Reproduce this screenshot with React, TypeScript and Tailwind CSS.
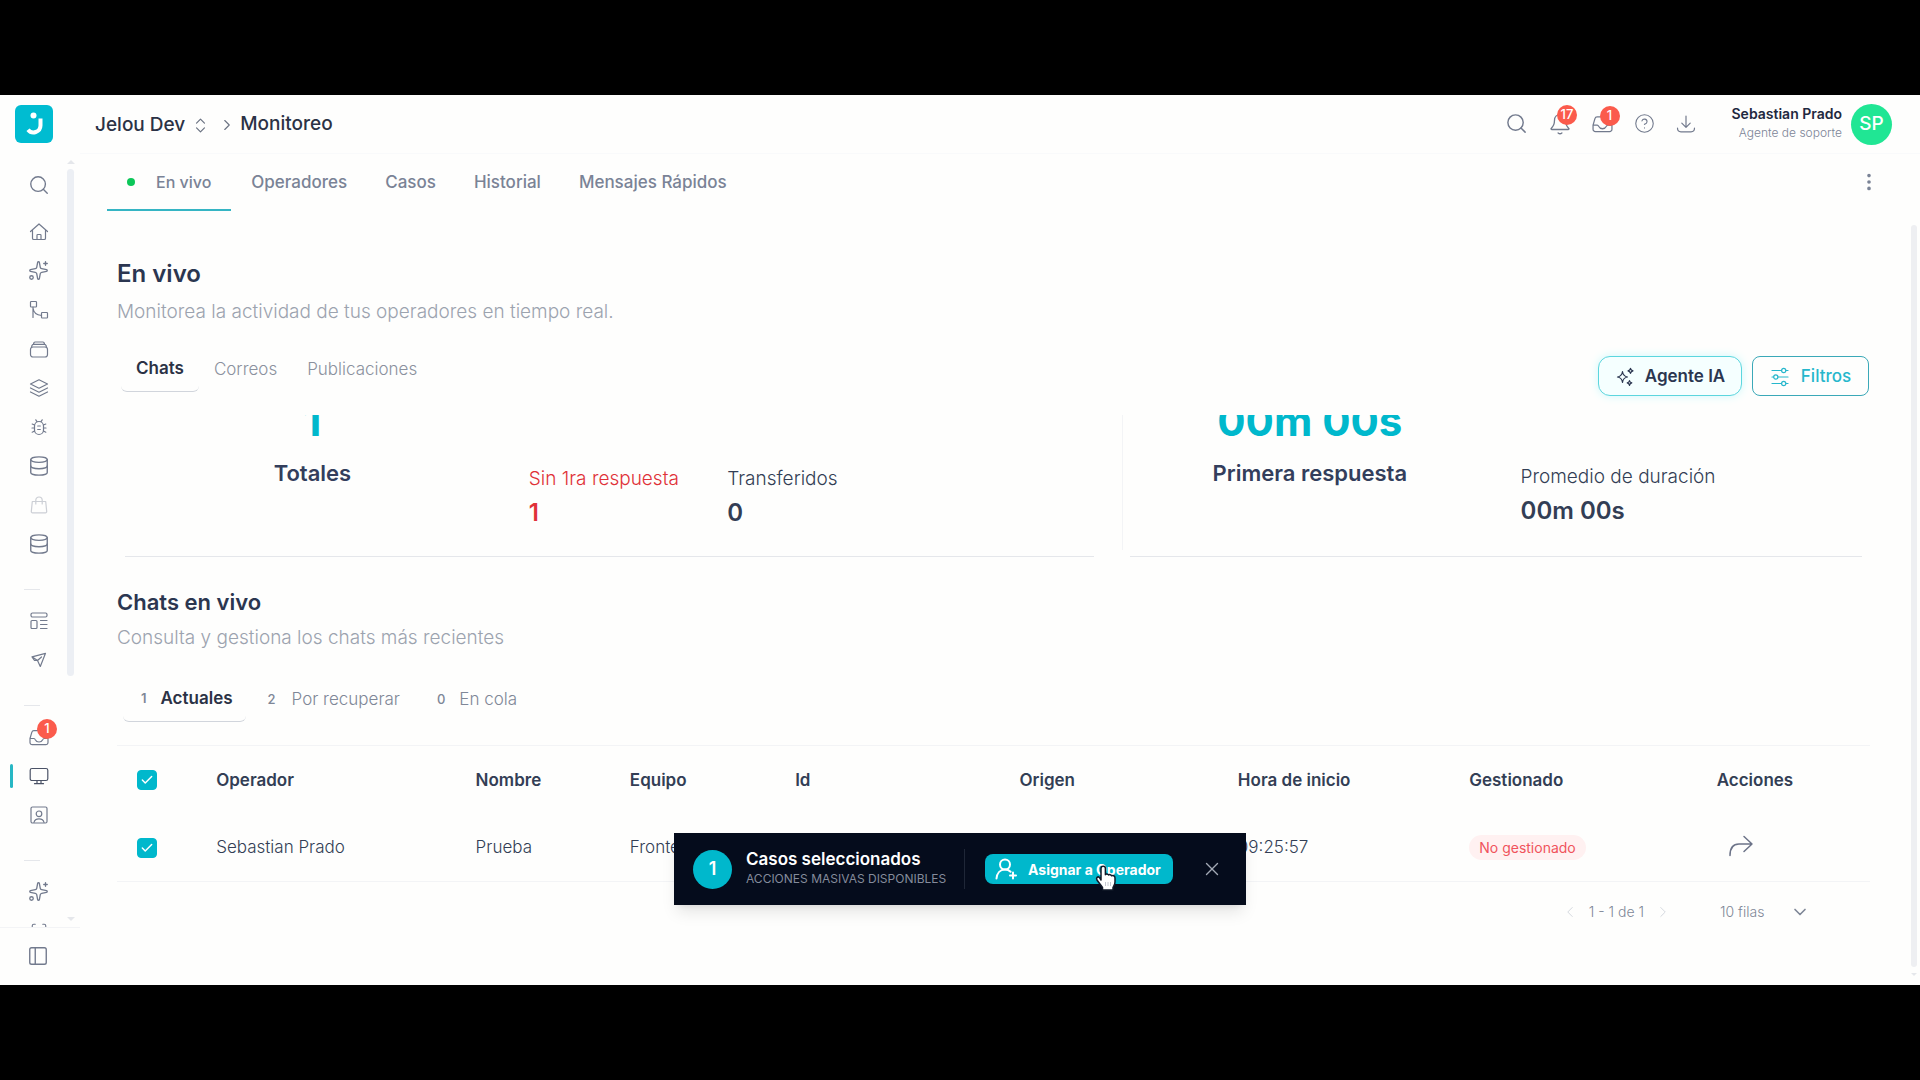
import { useState, type ReactNode } from "react"
import { Check, ChevronDown, ChevronLeft, ChevronRight, ChevronsUpDown, CircleQuestionMark, Database, EllipsisVertical, PanelLeft, Scan, Search, Sparkles, X } from "lucide-react"

type IconProps = { size?: number; className?: string; children: ReactNode };

function Icon({ size = 20, className = "", children }: IconProps) {
    return (
        <svg width={size} height={size} viewBox="0 0 20 20" fill="none" stroke="currentColor" strokeWidth="1.2" strokeLinecap="round" strokeLinejoin="round" className={className} aria-hidden="true">
            {children}
        </svg>
    )
}

const HomeIcon = () => (
    <Icon><path d="M1.5 9.5 10 2l8.500 7.500M3.500 8v8.200a1.300 1.300 0 0 0 1.300 1.300h10.400a1.300 1.300 0 0 0 1.300-1.300V8M8 17.500v-4.200a.8.8 0 0 1 .8-.8h2.400a.8.8 0 0 1 .8.8v4.200" /></Icon>
);
const FlowIcon = () => (
    <Icon><rect x="1.500" y="1.500" width="6" height="5.500" rx=".8" /><rect x="12.500" y="12.500" width="6" height="5.500" rx=".8" /><path d="M4 7v10.500M4 8c.5 4.500 3 7 8.500 7.500" /></Icon>
);
const ArchiveIcon = () => (
    <Icon><rect x="1.500" y="8" width="17" height="10" rx="2.500" /><path d="M2.500 8.300 3 6.500A1.500 1.500 0 0 1 4.500 5.300h11A1.500 1.500 0 0 1 17 6.500l.5 1.800M4.500 5.200l.3-1.200A1.300 1.300 0 0 1 6 3h8a1.300 1.300 0 0 1 1.200 1l.3 1.200" /></Icon>
);
const LayersIcon = () => (
    <Icon><path d="m10 1.800 8.500 4.200-8.500 4.200L1.500 6zM1.500 10l8.500 4.200 8.500-4.200M1.500 14l8.500 4.200 8.500-4.200" /></Icon>
);
const BugIcon = () => (
    <Icon><rect x="5.500" y="4.500" width="9" height="13" rx="4.500" /><path d="M8 4.600 6.800 2.800M12 4.600l1.200-1.800M5.500 8 3.200 7M5.500 11H3M5.500 14l-2.300 1.200M14.500 8l2.300-1M14.500 11H17M14.500 14l2.300 1.200M8.700 9h2.600M8.700 12.500h2.600" /></Icon>
);
const BagIcon = () => (
    <Icon><path d="M3.300 6.500h13.400l1 10a1.200 1.200 0 0 1-1.200 1.300h-13a1.200 1.200 0 0 1-1.200-1.300zM6.800 9V5.200a3.200 3.200 0 0 1 6.400 0V9" /></Icon>
);
const TemplateIcon = () => (
    <Icon><rect x="2" y="2" width="16" height="4" rx="1.500" /><rect x="2" y="9.500" width="6" height="8" rx="1" /><path d="M11.500 9.500H18M11.500 13.500H18M11.500 17.500H18" /></Icon>
);
const SendIcon = () => (
    <Icon><path d="m3 6.800 13.500-3.500-5.200 13.200-2.800-6zM8.500 10.500l4-3.500M3 6.800l2.500 3.700 3 0" /></Icon>
);
const InboxIcon = ({ size = 21 }: { size?: number }) => (
    <Icon size={size}><path d="M1 11.500 2.800 5.300A2.200 2.200 0 0 1 5 3.700h10a2.200 2.200 0 0 1 2.200 1.600L19 11.500v4a2.200 2.200 0 0 1-2.200 2.200H3.200A2.200 2.200 0 0 1 1 15.500zM1 11.500h4c.8 0 1 .5 1.300 1.200.7 1.500 2 2.300 3.700 2.300s3-.8 3.700-2.300c.3-.7.500-1.200 1.300-1.200h4" /></Icon>
);
const MonitorIcon = () => (
    <Icon><rect x="1.200" y="2.500" width="17.600" height="12" rx="1.800" /><path d="M8 14.500v3M12 14.500v3M5.500 17.700h9" /></Icon>
);
const ContactIcon = () => (
    <Icon><rect x="2" y="2" width="16" height="16" rx="1.500" /><circle cx="10" cy="8.800" r="2.800" /><path d="M5 17.500c.5-2.500 2.500-3.600 5-3.600s4.500 1.100 5 3.600" /></Icon>
);
const BellIcon = () => (
    <Icon size={22}><path d="M10 1.500c-3 0-5 2.200-5 5.200 0 4.300-1.500 6-3 7.300-.4.400-.2 1 .4 1h15.200c.6 0 .8-.6.400-1-1.500-1.300-3-3-3-7.300 0-3-2-5.200-5-5.200M8.300 18.200c1 .8 2.400.8 3.400 0" /></Icon>
);
const DownloadIcon = () => (
    <Icon><path d="M10 2v11M5.800 9.200 10 13.400l4.200-4.200M1.500 14c0 2.500.8 3.800 3.500 3.800h10c2.700 0 3.500-1.300 3.500-3.800" /></Icon>
);
const AgentIcon = () => (
    <Icon><path d="M7.500 4.500c.4 3.300 1.700 4.900 5 5.500-3.300.6-4.600 2.200-5 5.500-.4-3.300-1.700-4.900-5-5.500 3.300-.6 4.600-2.200 5-5.500zM15.500 1.300c.3 1.500 1 2.200 2.500 2.500-1.500.3-2.200 1-2.500 2.500-.3-1.500-1-2.200-2.500-2.500 1.500-.3 2.200-1 2.500-2.500zM14.500 13.500c.2 1.400.9 2.100 2.300 2.400-1.400.3-2.100 1-2.300 2.400-.2-1.400-.9-2.100-2.300-2.400 1.400-.3 2.100-1 2.300-2.400z" /></Icon>
);
const FiltersIcon = () => (
    <Icon><path d="M2 3.500h9.500M16 3.500h2M2 10h1.500M8 10h10M2 16.500h9.500M16 16.500h2" /><circle cx="13.700" cy="3.500" r="2.100" /><circle cx="5.800" cy="10" r="2.100" /><circle cx="13.700" cy="16.500" r="2.100" /></Icon>
);
const UserPlusIcon = () => (
    <svg width="24" height="24" viewBox="0 0 24 24" fill="none" stroke="currentColor" strokeWidth="2" strokeLinecap="round" aria-hidden="true">
        <circle cx="11" cy="7.500" r="5" /><path d="M2.500 21.500c.4-5 3.500-9 8.500-9 2.300 0 4.200.8 5.600 2.200M19 15.500v6M16 18.500h6" />
    </svg>
);
const ShareIcon = () => (
    <svg width="26" height="24" viewBox="0 0 26 24" fill="none" stroke="currentColor" strokeWidth="1.500" strokeLinecap="round" strokeLinejoin="round" aria-hidden="true">
        <path d="M2 21.500c0-7 2-11.500 9-11.500h13M16 2.500l8 7.500-8 7.500" />
    </svg>
);
const Logo = () => (
    <svg width="38" height="38" viewBox="0 0 38 38" aria-label="Jelou">
        <rect width="38" height="38" rx="6" fill="#00bcd1" />
        <circle cx="18.500" cy="10.500" r="3" fill="#fff" />
        <path d="M25.500 13.500v7a7 7 0 0 1-12.500 4.200" fill="none" stroke="#fff" strokeWidth="4" />
    </svg>
);

const menu: { label: string; icon?: ReactNode; badge?: number; active?: boolean; disabled?: boolean }[] = [
    { label: "Inicio", icon: <HomeIcon /> },
    { label: "Brain", icon: <Sparkles size={21} strokeWidth={1.5} /> },
    { label: "Flujos", icon: <FlowIcon /> },
    { label: "Archivo", icon: <ArchiveIcon /> },
    { label: "Capas", icon: <LayersIcon /> },
    { label: "Depurador", icon: <BugIcon /> },
    { label: "Datos", icon: <Database size={22} strokeWidth={1.5} /> },
    { label: "Tienda", icon: <BagIcon />, disabled: true },
    { label: "Bases", icon: <Database size={22} strokeWidth={1.5} /> },
    { label: "" },
    { label: "Plantillas", icon: <TemplateIcon /> },
    { label: "Campañas", icon: <SendIcon /> },
    { label: "" },
    { label: "Bandeja", icon: <InboxIcon size={20} />, badge: 1 },
    { label: "Monitoreo", icon: <MonitorIcon />, active: true },
    { label: "Contactos", icon: <ContactIcon /> },
    { label: "" },
    { label: "IA", icon: <Sparkles size={21} strokeWidth={1.5} /> },
    { label: "Escáner", icon: <Scan size={18} strokeWidth={1.5} /> },
];

function Badge({ value, className }: { value: number; className: string }) {
    return (
        <span className={`absolute flex h-5 min-w-5 items-center justify-center rounded-full bg-[#fb5b4c] px-1 text-[13px] font-medium text-white ${className}`}>{value}</span>
    )
}

function Sidebar() {
    return (
        <aside className="flex w-20 shrink-0 flex-col text-[#727a8d]">
            <div className="flex min-h-0 flex-1 overflow-hidden">
                <nav className="flex w-[67px] shrink-0 flex-col pl-[10px]">
                    <button aria-label="Buscar" className="mb-2 flex h-[50px] shrink-0 items-center justify-center pt-3">
                        <Search size={22} strokeWidth={1.5} />
                    </button>
                    {menu.map((item, i) => item.icon ? (
                        <a key={i} href="#" aria-label={item.label} className={`relative flex h-[39px] shrink-0 items-center justify-center ${item.active ? "text-[#4b5367]" : ""} ${item.disabled ? "opacity-35" : ""}`}>
                            {item.active && <span className="absolute left-0 h-6 w-[3px] rounded bg-[#27b7c4]" />}
                            {item.icon}
                            {item.badge && <Badge value={item.badge} className="left-[27px] top-[2px]" />}
                        </a>
                    ) : (
                        <div key={i} className="flex h-[38px] shrink-0 items-end pb-[11px] pl-[14px]">
                            <hr className="w-4 border-gray-200" />
                        </div>
                    ))}
                </nav>
                <div className="flex w-[7px] flex-col items-center py-[6px]">
                    <span className="h-0 w-0 border-x-4 border-b-4 border-x-transparent border-b-gray-200" />
                    <div className="mt-[5px] h-2/3 w-full rounded-full bg-[#eceff4]" />
                    <span className="mt-auto h-0 w-0 border-x-4 border-t-4 border-x-transparent border-t-gray-200" />
                </div>
            </div>
            <button aria-label="Contraer menú" className="flex h-[58px] w-full items-center justify-center border-t border-gray-100 pb-0.5 pr-1">
                <PanelLeft size={22} strokeWidth={1.5} />
            </button>
        </aside>
    )
}

function Header() {
    return (
        <header className="flex h-[58px] shrink-0 items-center">
            <a href="#" className="w-20 pb-1.5 pl-[15px] pt-1"><Logo /></a>
            <div className="flex h-full flex-1 items-center border-b border-gray-50 pl-[15px] pr-7">
                <button className="flex items-center pt-0.5 text-[19px] font-medium text-[#2b3245]">
                    Jelou Dev
                    <ChevronsUpDown size={19} strokeWidth={1.5} className="ml-1.5 mr-2 text-gray-500" />
                </button>
                <ChevronRight size={18} strokeWidth={1.5} className="mr-1 text-gray-500" />
                <span className="text-[19px] font-medium text-[#2b3245]">Monitoreo</span>
                <div className="ml-auto flex items-center gap-[21px] pb-0.5 text-[#727a8d]">
                    <button aria-label="Buscar"><Search size={23} strokeWidth={1.5} /></button>
                    <button aria-label="Notificaciones" className="relative"><BellIcon /><Badge value={17} className="-top-2 left-2" /></button>
                    <button aria-label="Bandeja" className="relative"><InboxIcon /><Badge value={1} className="-top-[7px] left-2" /></button>
                    <button aria-label="Ayuda"><CircleQuestionMark size={21} strokeWidth={1.25} /></button>
                    <button aria-label="Descargas"><DownloadIcon /></button>
                </div>
                <div className="ml-9 pb-1 text-right leading-[19px]">
                    <div className="text-sm leading-[19px] font-semibold text-[#1f2940]">Sebastian Prado</div>
                    <div className="text-xs leading-[19px] font-light text-[#7c8497]">Agente de soporte</div>
                </div>
                <div className="ml-[9px] flex h-[41px] w-[41px] items-center justify-center rounded-full bg-[#20e694] text-[19px] font-medium text-white">SP</div>
            </div>
        </header>
    )
}

function Stat({ label, value, className = "text-[#333e55]" }: { label: string; value: string; className?: string }) {
    return (
        <div className={className}>
            <div className="text-[19px] font-light leading-8">{label}</div>
            <div className="text-2xl font-semibold leading-9">{value}</div>
        </div>
    )
}

function BigStat({ label, value, className = "" }: { label: string; value: string; className?: string }) {
    return (
        <div className={`-mt-[18px] text-center ${className}`}>
            <div className="text-[42px] font-bold leading-[48px] text-[#00b8cc]">{value}</div>
            <div className="mt-[14px] text-[22px] font-semibold leading-7 text-[#333e5c]">{label}</div>
        </div>
    )
}

function CheckBox({ label }: { label: string }) {
    const [checked, setChecked] = useState(true);

    return (
        <label className="relative flex h-5 w-5 items-center justify-center">
            <input type="checkbox" aria-label={label} checked={checked} onChange={() => setChecked(!checked)} className="h-5 w-5 appearance-none rounded border border-gray-300 checked:border-[#00b8cc] checked:bg-[#00b8cc]" />
            {checked && <Check size={14} strokeWidth={2.5} className="pointer-events-none absolute text-white" />}
        </label>
    )
}

function ChatsTable() {
    return (
        <table className="mt-[23px] w-full table-fixed border-b border-gray-100 text-left text-[#333e55]">
            <colgroup>
                <col className="w-[99px]" />
                <col className="w-[259px]" />
                <col className="w-[154px]" />
                <col className="w-[165px]" />
                <col className="w-[224px]" />
                <col className="w-[218px]" />
                <col className="w-[231px]" />
                <col className="w-[247px]" />
                <col className="w-[153px]" />
            </colgroup>
            <thead>
                <tr className="h-[69px] border-t border-gray-100 text-[17px]">
                    <th className="pl-5"><CheckBox label="Seleccionar todos" /></th>
                    {["Operador", "Nombre", "Equipo", "Id", "Origen", "Hora de inicio", "Gestionado", "Acciones"].map((name) => (
                        <th key={name} className="font-semibold">{name}</th>
                    ))}
                </tr>
            </thead>
            <tbody>
                <tr className="h-[67px] text-[17px] font-light">
                    <td className="pl-5"><CheckBox label="Seleccionar Sebastian Prado" /></td>
                    <td>Sebastian Prado</td>
                    <td>Prueba</td>
                    <td>Frontend</td>
                    <td></td>
                    <td></td>
                    <td>09:25:57</td>
                    <td><span className="rounded-full bg-[#fff1f1] px-[10px] py-1 text-sm font-normal text-[#f0545c]">No gestionado</span></td>
                    <td className="pl-[11px] pt-1"><button aria-label="Transferir" className="text-[#6c7388]"><ShareIcon /></button></td>
                </tr>
            </tbody>
        </table>
    )
}

function SelectionBar() {
    return (
        <div className="absolute bottom-20 left-1/2 flex h-[72px] w-[572px] -translate-x-1/2 items-center bg-[#050c1c] pl-[19px] text-white shadow-lg">
            <div className="flex h-[39px] w-[39px] items-center justify-center rounded-full bg-[#00b8cc] text-lg font-semibold">1</div>
            <div className="ml-[14px] w-[219px] whitespace-nowrap border-r border-[#1f2737]">
                <div className="text-[17px] font-semibold leading-5">Casos seleccionados</div>
                <div className="text-xs leading-5 text-[#848b9b]">ACCIONES MASIVAS DISPONIBLES</div>
            </div>
            <button className="relative ml-5 flex h-[30px] w-[188px] items-center gap-[10px] rounded-lg bg-[#00b8cc] pl-[9px] text-[14px] font-bold whitespace-nowrap">
                <UserPlusIcon />
                Asignar a Operador
                <svg width="24" height="28" viewBox="0 0 24 28" className="absolute left-[109px] top-[10px]" aria-hidden="true">
                    <path d="M7 16V4.500a2.200 2.200 0 0 1 4.400 0v6.200c.6-1 2.600-1 3.200.3.700-.7 2.500-.5 3 .8 1-.6 3.400-.3 3.400 2.200V18c0 2.500-1.500 4-2 5.500V26H8.500v-2.500c-1.500-2.500-4-5-5.500-7.500-1.300-2.200.8-4 2.500-2.500z" fill="#fff" stroke="#111827" strokeWidth="1.500" strokeLinejoin="round" />
                    <path d="M11.500 18v4M14 18v4M16.500 18v4" stroke="#c4c8d0" strokeWidth="1" />
                </svg>
            </button>
            <button aria-label="Cerrar" className="ml-7 text-[#a3a9b5]"><X size={22} strokeWidth={1.5} /></button>
        </div>
    )
}

export default function App() {
    const [tab, setTab] = useState("Chats");

    return (
        <div className="h-screen bg-black py-[95px] font-['Inter',sans-serif]">
            <div className="relative flex h-full flex-col overflow-hidden bg-[#fefefd] pt-px">
                <Header />
                <div className="flex min-h-0 flex-1">
                    <Sidebar />
                    <main className="flex min-w-0 flex-1 flex-col">
                        <nav className="flex h-[57px] shrink-0 items-center pl-[27px] pr-10 text-[17px] font-medium text-[#7a8396]">
                            <a href="#" className="flex h-full items-center gap-[21px] border-b-2 border-[#35b5c4] px-5 text-base">
                                <span className="h-2 w-2 rounded-full bg-[#0cc759]" />
                                En vivo
                            </a>
                            <div className="flex gap-[38px] pl-5">
                                <a href="#">Operadores</a>
                                <a href="#">Casos</a>
                                <a href="#">Historial</a>
                                <a href="#">Mensajes Rápidos</a>
                            </div>
                            <button aria-label="Más opciones" className="ml-auto pb-0.5"><EllipsisVertical size={22} /></button>
                        </nav>
                        <div className="flex min-h-0 flex-1">
                            <div className="flex min-w-0 flex-1 flex-col overflow-hidden pl-[37px] pr-[41px]">
                                <h1 className="mt-[45px] text-2xl font-semibold leading-9 text-[#2b3650]">En vivo</h1>
                                <p className="mt-1.5 text-[19px] font-light leading-7 text-[#9ca3af]">Monitorea la actividad de tus operadores en tiempo real.</p>
                                <div className="mt-[30px] flex h-[59px] shrink-0 items-start justify-between">
                                    <div className="ml-1 flex text-[17px] text-[#8b919e]">
                                        {["Chats", "Correos", "Publicaciones"].map((name) => (
                                            <button key={name} onClick={() => setTab(name)} className={`h-9 px-[15px] pb-[9px] ${tab === name ? "rounded-md border-b border-gray-300 font-semibold text-[#2b3245]" : "font-light"}`}>{name}</button>
                                        ))}
                                    </div>
                                    <div className="flex gap-[10px] pr-px text-[17px]">
                                        <button className="flex h-10 w-[144px] items-center justify-center gap-[10px] rounded-xl border border-[#5cd6de] bg-[#f5ffff] pt-0.5 font-semibold text-[#2b3650] shadow-[0_0_10px_#cff9fb]">
                                            <AgentIcon />
                                            Agente IA
                                        </button>
                                        <button className="flex h-10 w-[117px] items-center justify-center gap-[11px] rounded-lg border border-[#3ba9b8] pt-0.5 font-medium text-[#27b7cc]">
                                            <FiltersIcon />
                                            Filtros
                                        </button>
                                    </div>
                                </div>
                                <div className="grid h-[142px] shrink-0 grid-cols-[4fr_3fr] gap-2 overflow-hidden">
                                    <section className="flex flex-col">
                                        <div className="grid flex-1 grid-cols-5">
                                            <BigStat label="Totales" value="1" className="col-span-2 pr-2" />
                                            <Stat label="Sin 1ra respuesta" value="1" className="pl-[13px] pt-12 text-[#e03138]" />
                                            <Stat label="Transferidos" value="0" className="pl-3 pt-12 text-[#333e55]" />
                                        </div>
                                        <hr className="ml-2 mr-5 border-gray-200" />
                                    </section>
                                    <section className="flex flex-col">
                                        <div className="mb-1.5 grid flex-1 grid-cols-2 border-l border-gray-100">
                                            <BigStat label="Primera respuesta" value="00m 00s" />
                                            <Stat label="Promedio de duración" value="00m 00s" className="pl-6 pt-[46px] text-[#333e55]" />
                                        </div>
                                        <hr className="mx-2 border-gray-200" />
                                    </section>
                                </div>
                                <h2 className="mt-[27px] text-[22px] font-semibold leading-9 text-[#2b3650]">Chats en vivo</h2>
                                <p className="mt-1 text-[19px] font-light leading-7 text-[#9ca3af]">Consulta y gestiona los chats más recientes</p>
                                <div className="mt-[34px] ml-[6px] flex text-[17px] font-light text-[#7f8797]">
                                    <button className="flex h-9 items-center gap-[14px] rounded-md border-b border-gray-300 pb-[9px] pl-[18px] pr-[13px] font-semibold text-[#2b3245]">
                                        <span className="text-[13px] text-[#7f8797]">1</span>
                                        Actuales
                                    </button>
                                    <button className="flex h-9 items-center gap-4 pb-[9px] pl-[22px]">
                                        <span className="text-[13px] font-medium">2</span>
                                        Por recuperar
                                    </button>
                                    <button className="flex h-9 items-center gap-[14px] pb-[9px] pl-[37px]">
                                        <span className="text-[13px] font-medium">0</span>
                                        En cola
                                    </button>
                                </div>
                                <ChatsTable />
                                <div className="flex items-center justify-end pr-[60px] pt-[18px] text-sm font-light text-[#7f8797]">
                                    <button aria-label="Anterior" className="text-gray-300"><ChevronLeft size={18} strokeWidth={1.25} /></button>
                                    <span className="px-[10px]">1 - 1 de 1</span>
                                    <button aria-label="Siguiente" className="text-gray-300"><ChevronRight size={18} strokeWidth={1.25} /></button>
                                    <div className="relative ml-12 flex h-6 w-[90px] items-center">
                                        <select aria-label="Filas por página" className="h-6 w-full appearance-none bg-transparent">
                                            <option>10 filas</option>
                                        </select>
                                        <ChevronDown size={20} className="pointer-events-none absolute right-0" />
                                    </div>
                                </div>
                            </div>
                            <div className="flex w-[9px] flex-col pb-[9px] pr-[3px] pt-[14px]">
                                <div className="flex-1 rounded-full bg-[#eeeff2]" />
                                <span className="mt-[6px] h-0 w-0 border-x-[3px] border-t-[3px] border-x-transparent border-t-gray-200" />
                            </div>
                        </div>
                    </main>
                </div>
                <SelectionBar />
            </div>
        </div>
    )
}
